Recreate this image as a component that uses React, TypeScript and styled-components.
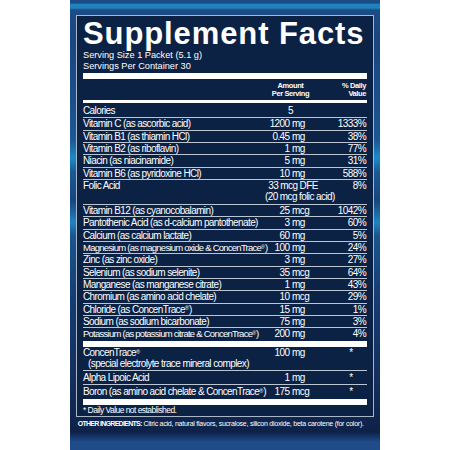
import React, { ReactNode } from 'react';
import styled, { createGlobalStyle } from 'styled-components';

const GlobalStyle = createGlobalStyle`
  html, body { margin: 0; padding: 0; background: #ffffff; }
  body { font-family: 'Liberation Sans', Arial, sans-serif; }
`;

const SANS = `'Liberation Sans', Arial, Helvetica, sans-serif`;

const Page = styled.div`
  width: 450px;
  height: 450px;
  display: flex;
  justify-content: center;
  overflow: hidden;
`;

const Panel = styled.div`
  width: 310px;
  height: 450px;
  box-sizing: border-box;
  padding: 15px 6px 0 6px;
  display: flex;
  flex-direction: column;
  background: linear-gradient(
    180deg,
    #1a4d86 0px,
    #1a4d86 3px,
    #1e82bc 4.5px,
    #1e82bc 8px,
    #1c4c86 10px,
    #1a4683 40px,
    #1b4f8c 100px,
    #1b5896 140px,
    #1d8bc6 158px,
    #1a5a97 172px,
    #17457f 200px,
    #1d6aa8 214px,
    #1e86c0 222px,
    #1a5590 236px,
    #153c72 300px,
    #142f5e 380px,
    #102650 415px,
    #0e2248 432px,
    #163a70 438px,
    #1f4c88 442px,
    #1f4c88 450px
  );
`;

const Label = styled.div`
  border: 1px solid #a9b6c8;
  background: #0c2244;
  padding: 0 6px;
  color: #ffffff;
  display: flex;
  flex-direction: column;
`;

const Title = styled.h1`
  margin: 0;
  padding-top: 1.6px;
  font-family: ${SANS};
  font-weight: 700;
  font-size: 31px;
  line-height: 31px;
  letter-spacing: 0.9px;
  white-space: nowrap;
`;

const Serving = styled.div`
  margin-top: 1.8px;
  font-size: 9.2px;
  line-height: 11px;
  white-space: nowrap;
`;

const Bar = styled.div<{ size: number; gap?: number }>`
  height: ${({ size }) => size}px;
  margin-top: ${({ gap }) => gap ?? 0}px;
  background: #ffffff;
`;

const Grid = styled.div`
  display: grid;
  grid-template-columns: minmax(0, 1fr) 32px 29px 46px;
  font-family: ${SANS};
  font-size: 10px;
  letter-spacing: -0.6px;
  line-height: 11.35px;
`;

const HeadRow = styled(Grid)`
  margin-top: 2.4px;
  margin-bottom: 2.1px;
  font-weight: 700;
  font-size: 7.5px;
  letter-spacing: -0.4px;
  line-height: 8px;
`;

const Row = styled(Grid)<{ last?: boolean; padTop?: number; padBottom?: number }>`
  padding-top: ${({ padTop }) => padTop ?? 0}px;
  padding-bottom: ${({ padBottom }) => padBottom ?? 0}px;
  border-bottom: ${({ last }) => (last ? 'none' : '1px solid #bcc6d3')};
`;

const Name = styled.div<{ squeeze?: boolean }>`
  white-space: nowrap;
  min-width: 0;
  font-size: ${({ squeeze }) => (squeeze ? '9.5px' : 'inherit')};
  letter-spacing: ${({ squeeze }) => (squeeze ? '-0.75px' : 'inherit')};
`;

const SubName = styled.div`
  padding-left: 5px;
`;

const Num = styled.div`
  text-align: right;
  padding-right: 2.5px;
  white-space: nowrap;
`;

const Unit = styled.div`
  white-space: nowrap;
`;

const Center = styled.div<{ shift?: number }>`
  grid-column: 2 / 4;
  text-align: center;
  padding-left: ${({ shift }) => shift ?? 0}px;
  white-space: nowrap;
`;

const Dv = styled.div<{ star?: boolean }>`
  text-align: ${({ star }) => (star ? 'center' : 'right')};
  padding-left: ${({ star }) => (star ? 14 : 0)}px;
  padding-right: ${({ star }) => (star ? 0 : 1)}px;
  white-space: nowrap;
`;

const Sup = styled.span`
  position: relative;
  top: -0.45em;
  font-size: 0.55em;
  line-height: 0;
  letter-spacing: 0;
`;

const Footnote = styled.div`
  padding: 0.5px 0 0.2px;
  font-family: ${SANS};
  font-size: 8.5px;
  letter-spacing: -0.55px;
  line-height: 10px;
`;

const Ingredients = styled.div`
  margin-top: 2.3px;
  padding-left: 1.7px;
  color: #ffffff;
  font-family: ${SANS};
  font-size: 7px;
  letter-spacing: -0.24px;
  line-height: 10px;
  white-space: nowrap;
`;

const IngLead = styled.span`
  font-weight: 700;
  letter-spacing: -0.7px;
`;

const CT = () => (
  <>
    ConcenTrace<Sup>®</Sup>
  </>
);

type Nutrient = { name: ReactNode; num: string; unit: string; dv: string; squeeze?: boolean };

const vitamins: Nutrient[] = [
  { name: 'Vitamin C (as ascorbic acid)', num: '1200', unit: 'mg', dv: '1333%' },
  { name: 'Vitamin B1 (as thiamin HCl)', num: '0.45', unit: 'mg', dv: '38%' },
  { name: 'Vitamin B2 (as riboflavin)', num: '1', unit: 'mg', dv: '77%' },
  { name: 'Niacin (as niacinamide)', num: '5', unit: 'mg', dv: '31%' },
  { name: 'Vitamin B6 (as pyridoxine HCl)', num: '10', unit: 'mg', dv: '588%' },
];

const minerals: Nutrient[] = [
  { name: 'Vitamin B12 (as cyanocobalamin)', num: '25', unit: 'mcg', dv: '1042%' },
  { name: 'Pantothenic Acid (as d-calcium pantothenate)', num: '3', unit: 'mg', dv: '60%' },
  { name: 'Calcium (as calcium lactate)', num: '60', unit: 'mg', dv: '5%' },
  {
    name: <>Magnesium (as magnesium oxide &amp; <CT />)</>,
    num: '100',
    unit: 'mg',
    dv: '24%',
    squeeze: true,
  },
  { name: 'Zinc (as zinc oxide)', num: '3', unit: 'mg', dv: '27%' },
  { name: 'Selenium (as sodium selenite)', num: '35', unit: 'mcg', dv: '64%' },
  { name: 'Manganese (as manganese citrate)', num: '1', unit: 'mg', dv: '43%' },
  { name: 'Chromium (as amino acid chelate)', num: '10', unit: 'mcg', dv: '29%' },
  { name: <>Chloride (as <CT />)</>, num: '15', unit: 'mg', dv: '1%' },
  { name: 'Sodium (as sodium bicarbonate)', num: '75', unit: 'mg', dv: '3%' },
];

const NutrientRow = ({ n }: { n: Nutrient }) => (
  <Row>
    <Name squeeze={n.squeeze}>{n.name}</Name>
    <Num>{n.num}</Num>
    <Unit>{n.unit}</Unit>
    <Dv>{n.dv}</Dv>
  </Row>
);

export default function App() {
  return (
    <Page>
      <GlobalStyle />
      <Panel>
        <Label>
          <Title>Supplement Facts</Title>
          <Serving>
            Serving Size 1 Packet (5.1 g)
            <br />
            Servings Per Container 30
          </Serving>
          <Bar size={6} gap={1} />
          <HeadRow>
            <Name />
            <Center>
              Amount
              <br />
              Per Serving
            </Center>
            <Dv>
              % Daily
              <br />
              Value
            </Dv>
          </HeadRow>
          <Bar size={3} />
          <Row padTop={2.4} padBottom={0.7}>
            <Name>Calories</Name>
            <Center>5</Center>
            <Dv />
          </Row>
          {vitamins.map((n, i) => (
            <NutrientRow key={i} n={n} />
          ))}
          <Row padBottom={1.2}>
            <Name>Folic Acid</Name>
            <Center shift={5}>
              33 mcg DFE
              <br />
              (20 mcg folic acid)
            </Center>
            <Dv>8%</Dv>
          </Row>
          {minerals.map((n, i) => (
            <NutrientRow key={i} n={n} />
          ))}
          <Row last padBottom={1.3}>
            <Name squeeze>
              Potassium (as potassium citrate &amp; <CT />)
            </Name>
            <Num>200</Num>
            <Unit>mg</Unit>
            <Dv>4%</Dv>
          </Row>
          <Bar size={6} />
          <Row>
            <Name>
              <CT />
              <SubName>(special electrolyte trace mineral complex)</SubName>
            </Name>
            <Num>100</Num>
            <Unit>mg</Unit>
            <Dv star>*</Dv>
          </Row>
          <Row padTop={1} padBottom={1}>
            <Name>Alpha Lipoic Acid</Name>
            <Num>1</Num>
            <Unit>mg</Unit>
            <Dv star>*</Dv>
          </Row>
          <Row last padTop={1} padBottom={1.6}>
            <Name>
              Boron (as amino acid chelate &amp; <CT />)
            </Name>
            <Num>175</Num>
            <Unit>mcg</Unit>
            <Dv star>*</Dv>
          </Row>
          <Bar size={6} />
          <Footnote>* Daily Value not established.</Footnote>
        </Label>
        <Ingredients>
          <IngLead>OTHER INGREDIENTS:</IngLead> Citric acid, natural flavors, sucralose, silicon dioxide, beta
          carotene (for color).
        </Ingredients>
      </Panel>
    </Page>
  );
}
